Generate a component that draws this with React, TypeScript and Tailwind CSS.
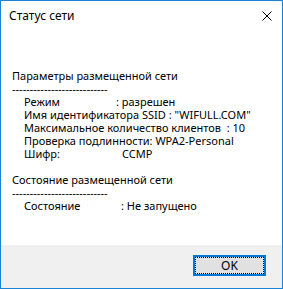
const lines: { label: string; value: string; w: string }[] = [
  { label: 'Режим', value: ': разрешен', w: 'w-[92px]' },
  { label: 'Имя идентификатора SSID', value: ': "WIFULL.COM"', w: '' },
  { label: 'Максимальное количество клиентов', value: ' : 10', w: '' },
  { label: 'Проверка подлинности:', value: 'WPA2-Personal', w: '' },
  { label: 'Шифр:', value: 'CCMP', w: 'w-[98px]' },
]

function Row({ label, value, w }: { label: string; value: string; w: string }) {
  return (
    <div className="pl-[23px] whitespace-pre">
      {w ? (
        <>
          <span className={`inline-block ${w}`}>{label}</span>
          {value}
        </>
      ) : (
        `${label} ${value}`
      )}
    </div>
  )
}

const dashes = '---------------------------'

export default function App() {
  return (
    <div
      className="w-[283px] h-[289px] border border-[#1883d7] bg-white flex flex-col text-black"
      style={{ fontFamily: '"Noto Sans", "Open Sans", sans-serif' }}
    >
      <div className="h-[30px] flex items-center justify-between pl-[8px] pr-[10px]">
        <span className="text-[12px]">Статус сети</span>
        <svg width="10" height="10" viewBox="0 0 10 10" className="mt-[-1px]">
          <path d="M0.5 0.5 L9.5 9.5 M9.5 0.5 L0.5 9.5" stroke="#000" strokeWidth="1" />
        </svg>
      </div>
      <div className="flex-1 pt-[38px] text-[11px] leading-[13px]">
        <div className="pl-[11px]">Параметры размещенной сети</div>
        <div className="pl-[11px]">{dashes}</div>
        {lines.map((l) => (
          <Row key={l.label} {...l} />
        ))}
        <div className="h-[13px]" />
        <div className="pl-[11px]">Состояние размещенной сети</div>
        <div className="pl-[11px]">{dashes}</div>
        <Row label="Состояние" value=": Не запущено" w="w-[97px]" />
      </div>
      <div className="h-[43px] bg-[#f0f0f0] flex items-start justify-end pt-[10px] pr-[16px]">
        <button className="w-[73px] h-[21px] border-2 border-[#0078d7] bg-[#e1e1e1] p-0">
          <div className="w-full h-full border border-dotted border-black flex items-center justify-center text-[12px]">
            OK
          </div>
        </button>
      </div>
    </div>
  )
}
